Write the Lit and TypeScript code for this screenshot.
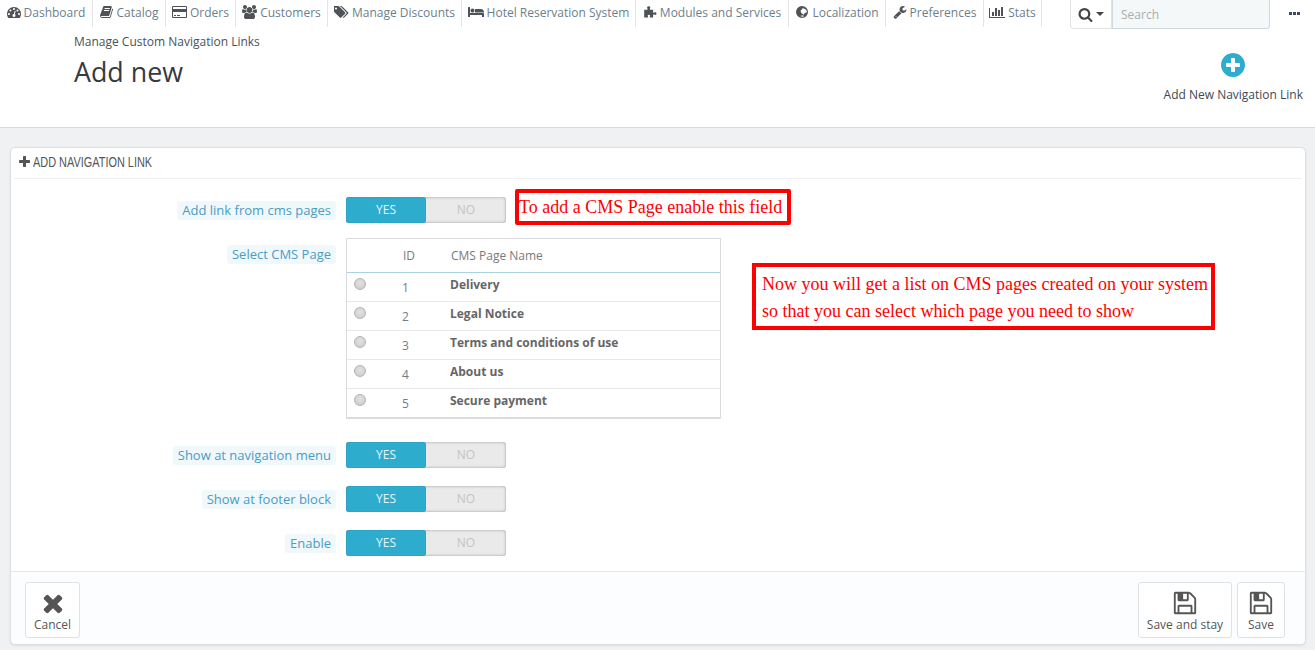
import { LitElement, html, css, svg } from "lit";
import { customElement } from "lit/decorators.js";

const P: Record<string, [number, string]> = {
  dash: [1792, "M384 1152q0-53-37.5-90.5t-90.5-37.5-90.5 37.5-37.5 90.5 37.5 90.5 90.5 37.5 90.5-37.5 37.5-90.5zm192-448q0-53-37.5-90.5t-90.5-37.5-90.5 37.5-37.5 90.5 37.5 90.5 90.5 37.5 90.5-37.5 37.5-90.5zm428 481l101-382q6-26-7.5-48.5t-38.5-29.5-48 6.5-30 39.5l-101 382q-60 5-107 43.5t-63 98.5q-20 77 20 146t117 89 146-20 89-117q16-60-6-117t-72-91zm660-33q0-53-37.5-90.5t-90.5-37.5-90.5 37.5-37.5 90.5 37.5 90.5 90.5 37.5 90.5-37.5 37.5-90.5zm-640-640q0-53-37.5-90.5t-90.5-37.5-90.5 37.5-37.5 90.5 37.5 90.5 90.5 37.5 90.5-37.5 37.5-90.5zm448 192q0-53-37.5-90.5t-90.5-37.5-90.5 37.5-37.5 90.5 37.5 90.5 90.5 37.5 90.5-37.5 37.5-90.5zm320 448q0 261-141 483-19 29-54 29h-1402q-35 0-54-29-141-221-141-483 0-182 71-348t191-286 286-191 348-71 348 71 286 191 191 286 71 348z"],
  book: [1792, "M1639 478q40 57 18 129l-275 906q-19 64-76.5 107.5t-122.5 43.5h-923q-77 0-148.5-53.5t-99.5-131.5q-24-67-2-127 0-4 3-27t4-37q1-8-3-21.5t-3-19.5q2-11 8-21t16.5-23.5 16.5-23.5q23-38 45-91.5t30-91.5q3-10 .5-30t-.5-28q3-11 17-28t17-23q21-36 42-92t25-90q1-9-2.5-32t.5-28q4-13 22-30.5t22-22.5q19-26 42.5-84.5t27.5-96.5q1-8-3-25.5t-2-26.5q2-8 9-18t18-23 17-21q8-12 16.5-30.5t15-35 16-36 19.5-32 26.5-23.5 36-11.5 47.5 5.5l-1 3q38-9 51-9h761q74 0 114 56t18 130l-274 906q-36 119-71.5 153.5t-128.5 34.5h-869q-27 0-38 15-11 16-1 43 24 70 144 70h923q29 0 56-15.5t35-41.5l300-987q7-22 5-57 38 15 59 43zm-1064 2q-4 13 2 22.5t20 9.5h608q13 0 25.5-9.5t16.5-22.5l21-64q4-13-2-22.5t-20-9.5h-608q-13 0-25.5 9.5t-16.5 22.5zm-83 256q-4 13 2 22.5t20 9.5h608q13 0 25.5-9.5t16.5-22.5l21-64q4-13-2-22.5t-20-9.5h-608q-13 0-25.5 9.5t-16.5 22.5z"],
  card: [1920, "M1760 128q66 0 113 47t47 113v1216q0 66-47 113t-113 47h-1600q-66 0-113-47t-47-113v-1216q0-66 47-113t113-47h1600zm-1600 128q-13 0-22.5 9.5t-9.5 22.5v224h1664v-224q0-13-9.5-22.5t-22.5-9.5h-1600zm1600 1280q13 0 22.5-9.5t9.5-22.5v-608h-1664v608q0 13 9.5 22.5t22.5 9.5h1600zm-1504-128v-128h256v128h-256zm384 0v-128h384v128h-384z"],
  users: [1920, "M593 896q-162 5-265 128h-134q-82 0-138-40.5t-56-118.5q0-353 124-353 6 0 43.5 21t97.5 42.5 119 21.5q67 0 133-23-5 37-5 66 0 139 81 256zm1071 637q0 120-73 189.5t-194 69.5h-874q-121 0-194-69.5t-73-189.5q0-53 3.5-103.5t14-109 26.5-108.5 43-97.5 62-81 85.5-53.5 111.5-20q10 0 43 21.5t73 48 107 48 135 21.5 135-21.5 107-48 73-48 43-21.5q61 0 111.5 20t85.5 53.5 62 81 43 97.5 26.5 108.5 14 109 3.5 103.5zm-1024-1277q0 106-75 181t-181 75-181-75-75-181 75-181 181-75 181 75 75 181zm704 384q0 159-112.5 271.5t-271.5 112.5-271.5-112.5-112.5-271.5 112.5-271.5 271.5-112.5 271.5 112.5 112.5 271.5zm576 225q0 78-56 118.5t-138 40.5h-134q-103-123-265-128 81-117 81-256 0-29-5-66 66 23 133 23 59 0 119-21.5t97.5-42.5 43.5-21q124 0 124 353zm-128-609q0 106-75 181t-181 75-181-75-75-181 75-181 181-75 181 75 75 181z"],
  tags: [1920, "M384 448q0-53-37.5-90.5t-90.5-37.5-90.5 37.5-37.5 90.5 37.5 90.5 90.5 37.5 90.5-37.5 37.5-90.5zm1067 576q0 53-37 90l-491 492q-39 37-91 37-53 0-90-37l-715-716q-38-37-64.5-101t-26.5-117v-416q0-52 38-90t90-38h416q53 0 117 26.5t102 64.5l715 714q37 39 37 91zm384 0q0 53-37 90l-491 492q-39 37-91 37-36 0-59-14t-53-45l470-470q37-37 37-90 0-52-37-91l-715-714q-38-38-102-64.5t-117-26.5h224q53 0 117 26.5t102 64.5l715 714q37 39 37 91z"],
  bed: [2048, "M256 1024h1728q26 0 45 19t19 45v448h-256v-256h-1536v256h-256v-1216q0-26 19-45t45-19h128q26 0 45 19t19 45v704zm576-320q0-106-75-181t-181-75-181 75-75 181 75 181 181 75 181-75 75-181zm1216 256v-64q0-159-112.5-271.5t-271.5-112.5h-704q-26 0-45 19t-19 45v384h1152z"],
  puzzle: [1792, "M150 620h430v-150c-90-50-100-300 150-300s240 250 150 300v150h420v370h130c50-90 300-90 300 110s-250 200-300 110h-130v400h-430v-130c90-50 70-230-110-230s-200 180-110 230v130h-500z"],
  wrench: [1792, "M448 1472q0-26-19-45t-45-19-45 19-19 45 19 45 45 19 45-19 19-45zm644-420l-682 682q-37 37-90 37-52 0-91-37l-106-108q-38-36-38-90 0-53 38-91l681-681q39 98 114.5 173.5t173.5 114.5zm634-435q0 39-23 106-47 134-164.5 217.5t-258.5 83.5q-185 0-316.5-131.5t-131.5-316.5 131.5-316.5 316.5-131.5q58 0 121.5 16.5t107.5 46.5q16 11 16 28t-16 28l-293 169v224l193 107q5-3 79-48.5t135.5-81 70.5-35.5q15 0 23.5 10t8.5 25z"],
  chart: [2048, "M640 896v512h-256v-512h256zm384-512v1024h-256v-1024h256zm1024 1152v128h-2048v-1280h128v1152h1920zm-640-896v768h-256v-768h256zm384-384v1152h-256v-1152h256z"],
  search: [1792, "M1216 832q0-185-131.5-316.5t-316.5-131.5-316.5 131.5-131.5 316.5 131.5 316.5 316.5 131.5 316.5-131.5 131.5-316.5zm512 832q0 52-38 90t-90 38q-54 0-90-38l-343-342q-179 124-399 124-143 0-273.5-55.5t-225-150-150-225-55.5-273.5 55.5-273.5 150-225 225-150 273.5-55.5 273.5 55.5 225 150 150 225 55.5 273.5q0 220-124 399l343 343q37 37 37 90z"],
  plusc: [1792, "M1344 960v-128q0-26-19-45t-45-19h-256v-256q0-26-19-45t-45-19h-128q-26 0-45 19t-19 45v256h-256q-26 0-45 19t-19 45v128q0 26 19 45t45 19h256v256q0 26 19 45t45 19h128q26 0 45-19t19-45v-256h256q26 0 45-19t19-45zm320-64q0 209-103 385.5t-279.5 279.5-385.5 103-385.5-103-279.5-279.5-103-385.5 103-385.5 279.5-279.5 385.5-103 385.5 103 279.5 279.5 103 385.5z"],
  save: [1792, "M512 1536h768v-384h-768v384zm896 0h128v-896q0-14-10-38.5t-20-34.5l-281-281q-10-10-34-20t-39-10v416q0 40-28 68t-68 28h-576q-40 0-68-28t-28-68v-416h-128v1280h128v-416q0-40 28-68t68-28h832q40 0 68 28t28 68v416zm-384-928v-320q0-13-9.5-22.5t-22.5-9.5h-192q-13 0-22.5 9.5t-9.5 22.5v320q0 13 9.5 22.5t22.5 9.5h192q13 0 22.5-9.5t9.5-22.5zm640 32v928q0 40-28 68t-68 28h-1344q-40 0-68-28t-28-68v-1344q0-40 28-68t68-28h928q40 0 88 20t76 48l280 280q28 28 48 76t20 88z"],
  times: [1792, "M1490 1322q0 40-28 68l-136 136q-28 28-68 28t-68-28l-294-294-294 294q-28 28-68 28t-68-28l-136-136q-28-28-28-68t28-68l294-294-294-294q-28-28-28-68t28-68l136-136q28-28 68-28t68 28l294 294 294-294q28-28 68-28t68 28l136 136q28 28 28 68t-28 68l-294 294 294 294q28 28 28 68z"],
  plus: [1408, "M1408 736v192q0 40-28 68t-68 28h-416v416q0 40-28 68t-68 28h-192q-40 0-68-28t-28-68v-416h-416q-40 0-68-28t-28-68v-192q0-40 28-68t68-28h416v-416q0-40 28-68t68-28h192q40 0 68 28t28 68v416h416q40 0 68 28t28 68z"],
  globe: [1792, "M896 128a768 768 0 1 0 0 1536a768 768 0 1 0 0-1536zM960 400C1180 400 1400 520 1490 720L1500 960L1260 1000L1120 1240L820 1010L700 720L850 600zM680 1400L1000 1300L1160 1440L900 1510z"],
};

const ico = (n: string, h: number) => {
  const [w, d] = P[n];
  return html`<svg class="ico" width=${(h * w) / 1792} height=${h} viewBox="0 0 ${w} 1792" fill="currentColor" fill-rule=${n === "globe" ? "evenodd" : "nonzero"}>${svg`<path d=${d}></path>`}</svg>`;
};

const NAV: [string, string, number][] = [
  ["Dashboard", "dash", 93],
  ["Catalog", "book", 73],
  ["Orders", "card", 70],
  ["Customers", "users", 92],
  ["Manage Discounts", "tags", 134],
  ["Hotel Reservation System", "bed", 174],
  ["Modules and Services", "puzzle", 153],
  ["Localization", "globe", 97],
  ["Preferences", "wrench", 98],
  ["Stats", "chart", 58],
];
const PAGES = ["Delivery", "Legal Notice", "Terms and conditions of use", "About us", "Secure payment"];

@customElement("app-root")
export class AppRoot extends LitElement {
  static styles = css`
    :host { display: block; width: 1315px; height: 650px; overflow: hidden; background: #eff1f2; font-family: "Open Sans", sans-serif; font-size: 12px; color: #555; position: relative; }
    .ico { display: block; flex: none; }
    .top { height: 127px; background: #fff; border-bottom: 1px solid #d9dcde; box-sizing: content-box; }
    .nav { display: flex; height: 27px; align-items: stretch; }
    .item { display: flex; align-items: center; justify-content: center; gap: 3px; box-sizing: border-box; height: 27px; border-right: 1px solid #e3e5e6; color: #6c7f8b; padding-bottom: 3px; white-space: nowrap; }
    .item .ico { color: #4f5357; }
    .tools { display: flex; margin-left: 28px; align-items: flex-start; }
    .sbtn { width: 42px; height: 29px; box-sizing: border-box; background: #fff; border: 1px solid #dfe3e5; border-top: 0; border-radius: 0 0 0 4px; display: flex; align-items: center; justify-content: center; gap: 3px; color: #444; }
    .caret { width: 0; height: 0; border-left: 4px solid transparent; border-right: 4px solid transparent; border-top: 4px solid #444; }
    .sinput { width: 158px; height: 29px; box-sizing: border-box; background: #f5f8f9; border: 1px solid #d0dade; border-top: 0; border-radius: 0 0 4px 0; color: #a9acae; padding: 6px 8px 0; line-height: 18px; }
    .more { display: flex; gap: 1px; margin: 12px 0 0 19px; }
    .more i { width: 3px; height: 3px; background: #3c4a66; display: block; }
    .head { display: flex; justify-content: space-between; padding: 6px 12px 0 74px; }
    .crumb { color: #47535c; line-height: 18px; }
    h1 { margin: 2px 0 0; font-size: 26.8px; font-weight: 400; line-height: 38px; color: #363a41; }
    .addlink { display: flex; flex-direction: column; align-items: center; color: #3e4a52; padding-top: 18px; gap: 7px; }
    .addlink .ico { color: #2eacce; }
    .panel { margin: 19px 9px 0 10px; height: 498px; box-sizing: border-box; background: #fff; border: 1px solid #dbe0e3; border-radius: 5px; box-shadow: 0 1px 2px rgba(0,0,0,.08); position: relative; display: flex; flex-direction: column; }
    .ph { height: 31px; margin: 0 3px; padding: 0 0 2px 5px; border-bottom: 1px solid #eef0f1; display: flex; align-items: center; gap: 3px; box-sizing: border-box; color: #555; font-family: "Liberation Sans", sans-serif; font-size: 14px; }
    .ph span { display: block; transform: scaleX(.78); transform-origin: left center; white-space: nowrap; }
    .form { flex: 1; padding-top: 18px; display: flex; flex-direction: column; }
    .row { display: grid; grid-template-columns: 325px auto; column-gap: 10px; justify-content: start; }
    .row.r2 { margin-top: 15px; }
    .row.r3 { margin-top: 23px; }
    .row.r4 { margin-top: 18px; }
    .label { justify-self: end; align-self: start; margin-top: 4px; color: #4a9cc4; background: #f0f8fc; font-size: 13px; line-height: 19px; padding: 0 5px; border-radius: 3px; white-space: nowrap; }
    .r2 .label { margin-top: 7px; }
    .sw { display: flex; width: 160px; height: 26px; border-radius: 3px; background: #eaeaea; box-shadow: inset 0 0 3px rgba(0,0,0,.35); line-height: 26px; text-align: center; }
    .sw span { flex: 1; color: #c4c4c4; }
    .sw .yes { background: #2eacce; color: #e6f5f9; border-radius: 3px; box-shadow: inset 0 0 1px rgba(0,0,0,.35); }
    .tbl { width: 375px; box-sizing: border-box; border: 1px solid #d9dcde; border-bottom-width: 2px; height: 181px; }
    .tr { display: grid; grid-template-columns: 50px 53px 1fr; height: 29px; align-items: center; border-bottom: 1px solid #e6e8e9; box-sizing: border-box; }
    .tr:last-child { border-bottom-color: transparent; }
    .tr.th { height: 34px; border-bottom: 1px solid #a8d3e3; color: #7a7a7a; }
    .tr.th .id { padding: 0 0 0 6px; color: #7a7a7a; }
    .tr.th span:last-child { padding-left: 1px; }
    .id { padding-left: 5px; color: #6c7f8b; padding-top: 1px; }
    .nm { font-weight: 700; color: #666; padding-bottom: 5px; }
    .rc { margin-left: 7px; margin-bottom: 7px; width: 12px; height: 12px; border-radius: 50%; background: radial-gradient(circle at 50% 40%, #e2e2e2, #c9c9c9); border: 1px solid #b4b4b4; box-sizing: border-box; }
    .foot { height: 73px; box-sizing: border-box; border-top: 1px solid #e6e9eb; background: #fcfdfe; border-radius: 0 0 5px 5px; display: flex; padding: 10px 20px 0 14px; gap: 5px; }
    .btn { height: 56px; box-sizing: border-box; background: #fff; border: 1px solid #dfe2e4; border-radius: 3px; display: flex; flex-direction: column; align-items: center; padding-top: 7px; color: #555; line-height: 17px; }
    .bi { height: 26px; display: flex; align-items: center; justify-content: center; }
    .spacer { flex: 1; }
    .note { position: absolute; box-sizing: border-box; border: 4px solid #f00; color: #f00; font-family: "Liberation Serif", serif; background: #fff; white-space: nowrap; }
    .n1 { left: 504px; top: 41px; width: 276px; height: 36px; font-size: 18px; line-height: 26px; padding-top: 1px; border-radius: 2px; }
    .n2 { left: 741px; top: 115px; width: 463px; height: 67px; font-size: 18px; line-height: 27px; padding: 4px 0 0 6px; }
  `;

  private sw() {
    return html`<div class="sw"><span class="yes">YES</span><span>NO</span></div>`;
  }

  render() {
    return html`
      <div class="top">
        <div class="nav">
          ${NAV.map(([t, i, w]) => html`<div class="item" style="width:${w}px">${ico(i, 14)}<span>${t}</span></div>`)}
          <div class="tools">
            <div class="sbtn">${ico("search", 15)}<div class="caret"></div></div>
            <div class="sinput">Search</div>
            <div class="more"><i></i><i></i><i></i></div>
          </div>
        </div>
        <div class="head">
          <div><div class="crumb">Manage Custom Navigation Links</div><h1>Add new</h1></div>
          <div class="addlink">${ico("plusc", 28)}<span>Add New Navigation Link</span></div>
        </div>
      </div>
      <div class="panel">
        <div class="ph">${ico("plus", 14)}<span>ADD NAVIGATION LINK</span></div>
        <div class="form">
          <div class="row"><div class="label">Add link from cms pages</div>${this.sw()}</div>
          <div class="row r2"><div class="label">Select CMS Page</div>
            <div class="tbl">
              <div class="tr th"><span></span><span class="id">ID</span><span>CMS Page Name</span></div>
              ${PAGES.map((p, i) => html`<div class="tr"><div class="rc"></div><span class="id">${i + 1}</span><span class="nm">${p}</span></div>`)}
            </div>
          </div>
          <div class="row r3"><div class="label">Show at navigation menu</div>${this.sw()}</div>
          <div class="row r4"><div class="label">Show at footer block</div>${this.sw()}</div>
          <div class="row r4"><div class="label">Enable</div>${this.sw()}</div>
        </div>
        <div class="foot">
          <div class="btn" style="width:55px"><div class="bi">${ico("times", 28)}</div><span>Cancel</span></div>
          <div class="spacer"></div>
          <div class="btn" style="width:94px"><div class="bi">${ico("save", 26)}</div><span>Save and stay</span></div>
          <div class="btn" style="width:48px"><div class="bi">${ico("save", 26)}</div><span>Save</span></div>
        </div>
        <div class="note n1">To add a CMS Page enable this field</div>
        <div class="note n2">Now you will get a list on CMS pages created on your system<br />so that you can select which page you need to show</div>
      </div>
    `;
  }
}
